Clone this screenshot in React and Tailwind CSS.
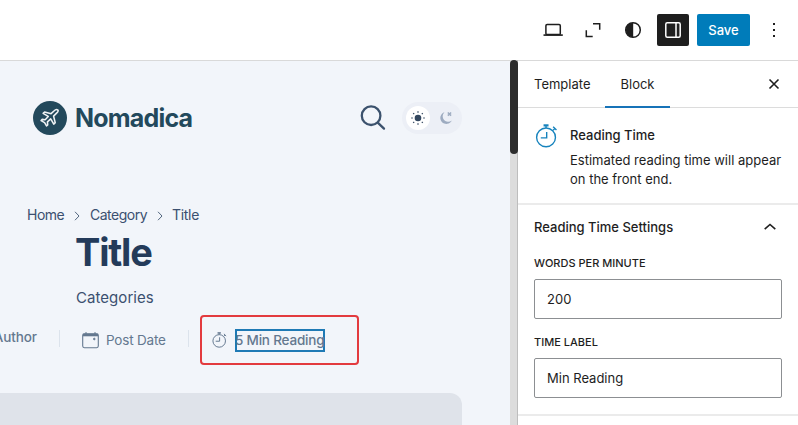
import React from "react";

function Stopwatch({ className, strokeWidth = 1.6 }) {
  return (
    <svg className={className} viewBox="0 0 24 26" fill="none" stroke="currentColor" strokeWidth={strokeWidth}>
      <circle cx="11.5" cy="14.5" r="10.2" />
      <path d="M11.5 4.3V1.8M19.2 3l3.6 3.6M19.2 6.8l1.8-1.8M12.2 8.6v6.4H5.8" />
      <path d="M8.8 1.5h5.4" strokeWidth="2.4" />
    </svg>
  );
}

function Toolbar() {
  return (
    <header className="flex h-[61px] shrink-0 items-center justify-end border-b border-[#d9d9d9] bg-white pr-[12px] text-[#1e1e1e]">
      <svg className="h-6 w-6" viewBox="0 0 24 24" fill="none" stroke="currentColor" strokeWidth="1.5">
        <rect x="4.9" y="6.6" width="14.4" height="10" rx="1.2" />
        <path d="M2.5 17.1h19.3" strokeWidth="1.6" />
      </svg>
      <svg className="ml-4 h-6 w-6" viewBox="0 0 24 24" fill="none" stroke="currentColor" strokeWidth="1.5">
        <path d="M12 5.8h6.7v6M5.3 12.2v6.2h6.4" />
      </svg>
      <svg className="ml-4 h-6 w-6" viewBox="0 0 24 24">
        <circle cx="12" cy="12" r="7.3" fill="none" stroke="currentColor" strokeWidth="1.5" />
        <path d="M12.2 4.7a7.3 7.3 0 0 0 0 14.6z" fill="currentColor" />
      </svg>
      <div className="ml-3 flex h-8 w-8 items-center justify-center rounded-[2px] bg-[#1e1e1e] text-white">
        <svg className="h-6 w-6" viewBox="0 0 24 24" fill="none" stroke="currentColor" strokeWidth="1.5">
          <rect x="4.8" y="4.8" width="14.4" height="14.4" rx="1.5" />
          <path d="M15 5v14" />
        </svg>
      </div>
      <button className="ml-2 h-8 w-[53px] rounded-[2px] bg-[#007cba] pt-px text-[13px] font-medium text-white">Save</button>
      <svg className="ml-3 h-6 w-6" viewBox="0 0 24 24" fill="currentColor">
        <path d="M11 5h2v2h-2zM11 11h2v2h-2zM11 17h2v2h-2z" />
      </svg>
    </header>
  );
}

function SiteHeader() {
  return (
    <div className="flex h-[34px] items-center pl-[33px]">
      <div className="flex h-[34px] w-[34px] items-center justify-center rounded-full bg-[#23495c]">
        <svg className="h-[22px] w-[22px]" viewBox="0 0 24 24" fill="none" stroke="#f0f3f5" strokeWidth="1.7" strokeLinejoin="round">
          <path d="M20.6 3.4c-1.2-1.1-2.9-.4-4 .7l-3.4 3.2-7.1-1.9-1.6 1.5 5.6 3.4-3.4 3.6-3.2-.4-1.2 1.3 3.8 2.2 2.1 3.7 1.3-1.1-.3-3.3 3.6-3.3 3.3 5.7 1.6-1.6-1.8-7.1 3.3-3.3c1.1-1 2.3-2.3 1.4-3.3z" />
        </svg>
      </div>
      <div className="ml-[8px] w-[120px] whitespace-nowrap text-[25px] leading-[34px] font-bold tracking-[-0.8px] text-[#23495c]">Nomadica</div>
      <svg className="ml-[165px] h-[26px] w-[26px] shrink-0" viewBox="0 0 26 26" fill="none" stroke="#3c526d" strokeWidth="2.3" strokeLinecap="round">
        <circle cx="11.1" cy="10.7" r="9.3" />
        <path d="M18 17.8l6 5.8" />
      </svg>
      <div className="ml-[16px] flex h-8 w-[60px] shrink-0 items-center rounded-full bg-[#eceff6] pl-1">
        <div className="flex h-6 w-6 items-center justify-center rounded-full bg-white text-[#33475f]">
          <svg className="h-[14px] w-[14px]" viewBox="0 0 14 14">
            <circle cx="7" cy="7" r="3.3" fill="currentColor" />
            <path d="M7 .2v1.6M7 12.2v1.6M.2 7h1.6M12.2 7h1.6M2.2 2.2l1 1M10.8 10.8l1 1M2.2 11.8l1-1M10.8 3.2l1-1" stroke="currentColor" strokeWidth="1.2" />
          </svg>
        </div>
        <svg className="ml-[9px] h-[14px] w-[14px] text-[#9dabc0]" viewBox="0 0 14 14">
          <path d="M5.5 1.2A6 6 0 1 0 12.8 9.4 4.6 4.6 0 0 1 5.5 1.2z" fill="currentColor" />
          <path d="M8.8 1.5l3.3 3.1M12.1 1.5L8.8 4.6" stroke="currentColor" strokeWidth="1.5" />
        </svg>
      </div>
    </div>
  );
}

function Crumb() {
  return (
    <svg className="mt-px h-[10px] w-[26px]" viewBox="0 0 26 10" fill="none" stroke="#53677f" strokeWidth="1">
      <path d="M11 .8l4 4.2-4 4.2" />
    </svg>
  );
}

function Canvas() {
  return (
    <main className="flex min-w-0 flex-1 flex-col overflow-hidden bg-[#f2f5fa] pt-10 text-[#3b5070]">
      <SiteHeader />
      <nav className="mt-[70px] flex h-5 items-center pl-[27px] text-[14px] leading-5 whitespace-nowrap">
        <span className="w-[37px] tracking-[-0.5px]">Home</span>
        <Crumb />
        <span className="w-[57px] tracking-[-0.5px]">Category</span>
        <Crumb />
        <span className="-ml-px w-[27px] tracking-[-0.3px]">Title</span>
      </nav>
      <h1 className="mt-[2px] h-[50px] pl-[75px] text-[38px] leading-[50px] font-bold tracking-[-1.2px] text-[#243b5a]">Title</h1>
      <div className="mt-[11px] h-5 pl-[76px] text-[15px] leading-5 tracking-[0.05px]">Categories</div>
      <div className="mt-[7px] flex h-[50px] items-center whitespace-nowrap text-[#64788f]">
        <div className="-ml-[10px] flex w-[47px] justify-end pb-[6px] text-[13.5px] font-medium tracking-[-0.1px]">Author</div>
        <div className="mb-[4px] ml-[22px] h-[17px] w-px bg-[#dce3ec]" />
        <svg className="ml-[22px] h-[17px] w-[17px] shrink-0" viewBox="0 0 17 17" fill="none" stroke="currentColor">
          <rect x=".7" y="1.7" width="15.6" height="14" rx="1.6" strokeWidth="1.1" />
          <path d="M1 3h15" strokeWidth="2.6" />
          <path d="M4 0v2M13 0v2" />
          <circle cx="12.3" cy="7" r=".8" fill="currentColor" />
        </svg>
        <div className="ml-[7px] w-[61px] text-[13.5px] tracking-[-0.2px]">Post Date</div>
        <div className="mb-[4px] ml-[21px] h-[17px] w-px bg-[#dce3ec]" />
        <div className="ml-[11px] flex h-[50px] w-[159px] items-center rounded-[4px] border-2 border-[#e33a3e] pl-[10px]">
          <Stopwatch className="h-[16px] w-[15px]" />
          <div className="ml-[8px] flex h-[23px] w-[90px] items-center border-2 border-[#1f7ab5]">
            <span className="-ml-[2px] text-[13.5px] font-medium tracking-[-0.2px]">5 Min Reading</span>
          </div>
        </div>
      </div>
      <div className="mt-[28px] w-[462px] flex-1 rounded-tr-xl bg-[#dfe3ea]" />
    </main>
  );
}

function Field({ label, value }) {
  return (
    <label className="block">
      <span className="block h-4 text-[11px] leading-4 font-medium uppercase">{label}</span>
      <span className="mt-2 flex h-10 items-center rounded-[2px] border border-[#8c8f92] px-3 pt-[2px] text-[13px]">{value}</span>
    </label>
  );
}

function Sidebar() {
  return (
    <aside className="flex w-[280px] shrink-0 flex-col bg-white text-[13px] text-[#1e1e1e]">
      <div className="flex h-[47px] shrink-0 border-b border-[#dcdcdc]">
        <div className="flex w-[87px] items-center pt-[2px] pl-4">Template</div>
        <div className="-mb-px flex w-[65px] items-center justify-center border-b-2 border-[#1773b8] pt-[3px]">Block</div>
        <svg className="mt-[11px] ml-[92px] h-6 w-6" viewBox="0 0 24 24" fill="none" stroke="currentColor" strokeWidth="1.6">
          <path d="M7.5 7.5l9 9M16.5 7.5l-9 9" />
        </svg>
      </div>
      <div className="flex h-[95px] shrink-0 pt-4 pl-[17px]">
        <Stopwatch className="h-[24px] w-[23px] text-[#1683bd]" strokeWidth={1.5} />
        <div className="ml-3 pt-[2px]">
          <h2 className="text-[13px] leading-[19px] font-medium">Reading Time</h2>
          <p className="mt-[6px] leading-[19px] whitespace-nowrap">Estimated reading time will appear<br />on the front end.</p>
        </div>
      </div>
      <section className="h-[213px] shrink-0 border-y-2 border-[#ebebeb] px-4">
        <div className="flex h-[46px] items-center justify-between font-medium">
          Reading Time Settings
          <svg className="mb-[2px] h-6 w-6" viewBox="0 0 24 24" fill="none" stroke="currentColor" strokeWidth="1.6">
            <path d="M6.7 14.2L12 9.5l5.3 4.7" />
          </svg>
        </div>
        <div className="flex flex-col gap-[15px] pt-[4px]">
          <Field label="Words per minute" value="200" />
          <Field label="Time label" value="Min Reading" />
        </div>
      </section>
    </aside>
  );
}

export default function App() {
  return (
    <div className="flex h-[425px] w-[798px] flex-col overflow-hidden bg-white font-['Inter','Liberation_Sans',sans-serif]">
      <Toolbar />
      <div className="flex min-h-0 flex-1">
        <Canvas />
        <div className="-mt-px w-2 shrink-0 border-r border-[#bdbdbd] bg-[#dcdcdc]">
          <div className="h-[94px] w-2 rounded-full bg-[#2c2c2c]" />
        </div>
        <Sidebar />
      </div>
    </div>
  );
}
